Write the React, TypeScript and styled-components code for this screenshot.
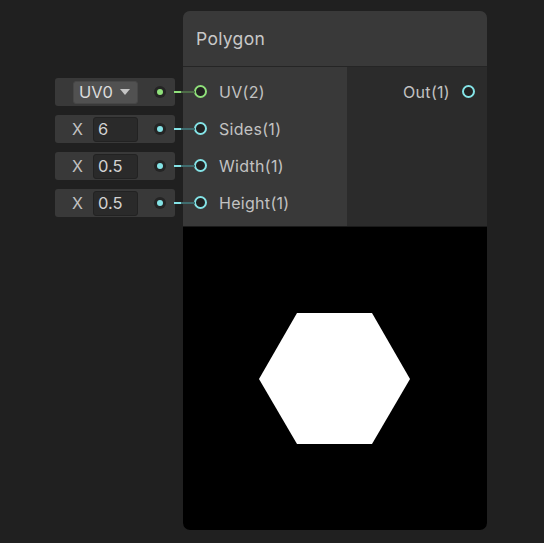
import React from "react";
import styled, { createGlobalStyle } from "styled-components";

const Global = createGlobalStyle`
  html, body { margin: 0; padding: 0; background: #202020; }
  body { font-family: Inter, "Noto Sans", "DejaVu Sans", sans-serif; }
  * { box-sizing: border-box; }
`;

const GREEN = "#8fe07a";
const CYAN = "#84e3e6";

const Canvas = styled.div`
  display: flex;
  align-items: flex-start;
  padding: 11px 0 0 55px;
  width: 544px;
  height: 543px;
  overflow: hidden;
  background: #202020;
`;

const FieldColumn = styled.div`
  position: relative;
  z-index: 2;
  width: 120px;
  margin-top: 67px;
  margin-right: 8px;
  display: flex;
  flex-direction: column;
  gap: 9px;
`;

const FieldRow = styled.div`
  position: relative;
  height: 28px;
  background: #393939;
  border-radius: 3px;
  display: flex;
  align-items: center;
  padding-left: 17px;
  color: #c2c2c2;
  font-size: 16px;
`;

const AxisLabel = styled.span`
  width: 21px;
  line-height: 1;
`;

const NumberBox = styled.div`
  width: 45px;
  height: 25px;
  background: #2a2a2a;
  border: 1px solid #222;
  border-radius: 3px;
  display: flex;
  align-items: center;
  padding-left: 4px;
  color: #d2d2d2;
  font-size: 16.5px;
`;

const Dropdown = styled.div`
  margin-left: 1px;
  width: 65px;
  height: 23px;
  background: #515151;
  border: 1px solid #474747;
  border-radius: 3px;
  display: flex;
  align-items: center;
  padding-left: 5px;
  gap: 7px;
  color: #dcdcdc;
  font-size: 16.5px;
`;

const Caret = styled.span`
  width: 0;
  height: 0;
  border-left: 5px solid transparent;
  border-right: 5px solid transparent;
  border-top: 6px solid #c4c4c4;
`;

const DotSocket = styled.span<{ $color: string }>`
  position: absolute;
  left: 99px;
  top: 50%;
  width: 12px;
  height: 12px;
  margin-top: -6px;
  border-radius: 50%;
  background: #242424;
  display: flex;
  align-items: center;
  justify-content: center;
  &::after {
    content: "";
    width: 6px;
    height: 6px;
    border-radius: 50%;
    background: ${(p) => p.$color};
  }
`;

const Wire = styled.span<{ $color: string; $dim: string }>`
  position: absolute;
  left: 119px;
  top: 50%;
  margin-top: -1px;
  width: 21px;
  height: 2px;
  background: linear-gradient(
    to right,
    ${(p) => p.$color} 0,
    ${(p) => p.$color} 7px,
    ${(p) => p.$dim} 7px,
    ${(p) => p.$dim} 100%
  );
`;

const Node = styled.div`
  width: 304px;
  height: 519px;
  border-radius: 7px;
  overflow: hidden;
  display: flex;
  flex-direction: column;
  background: #2b2b2b;
  position: relative;
  z-index: 1;
`;

const Header = styled.div`
  height: 56px;
  flex: none;
  background: #393939;
  border-bottom: 1px solid #252525;
  display: flex;
  align-items: center;
  padding-left: 13px;
  padding-bottom: 1px;
  color: #c8c8c8;
  font-size: 17.5px;
  letter-spacing: 0.3px;
`;

const Body = styled.div`
  flex: none;
  height: 159px;
  display: grid;
  grid-template-columns: 164px 1fr;
`;

const InputCol = styled.div`
  background: #393939;
  padding: 6px 0 5px;
  display: flex;
  flex-direction: column;
`;

const OutputCol = styled.div`
  background: #2b2b2b;
  padding: 6px 0 5px;
  display: flex;
  flex-direction: column;
`;

const PortRow = styled.div<{ $out?: boolean }>`
  height: 37px;
  display: flex;
  align-items: center;
  gap: 12px;
  padding: ${(p) => (p.$out ? "0 12px 0 0" : "0 0 0 11px")};
  justify-content: ${(p) => (p.$out ? "flex-end" : "flex-start")};
  color: #c2c2c2;
  font-size: 16px;
  letter-spacing: 0.3px;
`;

const Ring = styled.span<{ $color: string }>`
  flex: none;
  width: 13px;
  height: 13px;
  border-radius: 50%;
  border: 2px solid ${(p) => p.$color};
  background: #222;
`;

const Preview = styled.div`
  flex: 1;
  background: #000;
  border-top: 1px solid #1a1a1a;
  display: flex;
`;

const PreviewSvg = styled.svg`
  width: 100%;
  height: 100%;
  display: block;
`;

type Field = {
  kind: "dropdown" | "number";
  value: string;
  color: string;
  dim: string;
};

const fields: Field[] = [
  { kind: "dropdown", value: "UV0", color: GREEN, dim: "#4d6b47" },
  { kind: "number", value: "6", color: CYAN, dim: "#3f6c6e" },
  { kind: "number", value: "0.5", color: CYAN, dim: "#3f6c6e" },
  { kind: "number", value: "0.5", color: CYAN, dim: "#3f6c6e" },
];

const inputs = [
  { label: "UV(2)", color: GREEN },
  { label: "Sides(1)", color: CYAN },
  { label: "Width(1)", color: CYAN },
  { label: "Height(1)", color: CYAN },
];

export default function App() {
  return (
    <>
      <Global />
      <Canvas>
        <FieldColumn>
          {fields.map((f, i) => (
            <FieldRow key={i}>
              {f.kind === "dropdown" ? (
                <Dropdown>
                  <span>{f.value}</span>
                  <Caret />
                </Dropdown>
              ) : (
                <>
                  <AxisLabel>X</AxisLabel>
                  <NumberBox>{f.value}</NumberBox>
                </>
              )}
              <DotSocket $color={f.color} />
              <Wire $color={f.color} $dim={f.dim} />
            </FieldRow>
          ))}
        </FieldColumn>
        <Node>
          <Header>Polygon</Header>
          <Body>
            <InputCol>
              {inputs.map((p) => (
                <PortRow key={p.label}>
                  <Ring $color={p.color} />
                  <span>{p.label}</span>
                </PortRow>
              ))}
            </InputCol>
            <OutputCol>
              <PortRow $out>
                <span>Out(1)</span>
                <Ring $color={CYAN} />
              </PortRow>
            </OutputCol>
          </Body>
          <Preview>
            <PreviewSvg viewBox="0 0 304 303">
              <polygon
                points="76,152 114,86 189,86 227,152 189,217 114,217"
                fill="#fff"
              />
            </PreviewSvg>
          </Preview>
        </Node>
      </Canvas>
    </>
  );
}
